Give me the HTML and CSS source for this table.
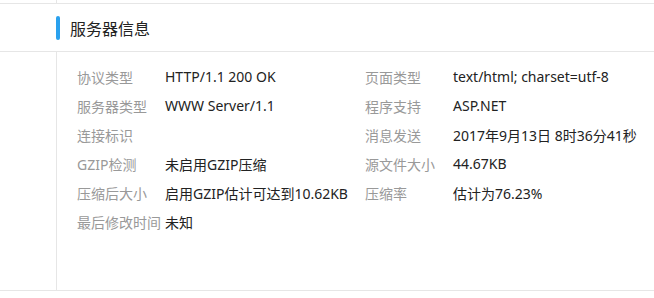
FILE: index.html
```html
<!DOCTYPE html>
<html lang="zh-CN">
<head>
<meta charset="utf-8">
<title>服务器信息</title>
<link rel="stylesheet" href="styles.css">
</head>
<body>
<div class="page">
  <div class="top-strip"></div>
  <div class="panel-head">
    <span class="head-bar"></span>
    <h2 class="head-title">服务器信息</h2>
  </div>
  <div class="panel-body">
    <div class="info-grid">
      <div class="item"><span class="label">协议类型</span><span class="value">HTTP/1.1 200 OK</span></div>
      <div class="item"><span class="label">页面类型</span><span class="value">text/html; charset=utf-8</span></div>
      <div class="item"><span class="label">服务器类型</span><span class="value">WWW Server/1.1</span></div>
      <div class="item"><span class="label">程序支持</span><span class="value">ASP.NET</span></div>
      <div class="item"><span class="label">连接标识</span><span class="value"></span></div>
      <div class="item"><span class="label">消息发送</span><span class="value">2017年9月13日 8时36分41秒</span></div>
      <div class="item"><span class="label">GZIP检测</span><span class="value">未启用GZIP压缩</span></div>
      <div class="item"><span class="label">源文件大小</span><span class="value">44.67KB</span></div>
      <div class="item"><span class="label">压缩后大小</span><span class="value">启用GZIP估计可达到10.62KB</span></div>
      <div class="item"><span class="label">压缩率</span><span class="value">估计为76.23%</span></div>
      <div class="item"><span class="label">最后修改时间</span><span class="value">未知</span></div>
    </div>
  </div>
</div>
</body>
</html>
```

FILE: styles.css
```css
html, body {
  margin: 0;
  padding: 0;
  background: #ffffff;
}

body {
  font-family: "Noto Sans", "Noto Sans CJK SC", sans-serif;
  font-size: 14px;
  color: #333333;
}

.page {
  width: 654px;
}

.top-strip {
  height: 3px;
  margin-left: 56px;
  border-left: 1px solid #e6e6e6;
}

.panel-head {
  height: 47px;
  border-top: 1px solid #e6e6e6;
  border-bottom: 1px solid #e6e6e6;
  display: flex;
  align-items: center;
  padding-left: 56px;
}

.head-bar {
  width: 4px;
  height: 24px;
  border-radius: 2px;
  background: #2aa1ee;
  margin-top: 1px;
}

.head-title {
  margin: 0 0 0 10px;
  font-size: 16px;
  font-weight: normal;
  color: #222222;
  line-height: 24px;
  padding-top: 2px;
}

.panel-body {
  display: flex;
  height: 228px;
  padding-top: 10px;
  border-bottom: 1px solid #e6e6e6;
}

.panel-body::before {
  content: "";
  width: 56px;
  flex: none;
  border-right: 1px solid #e6e6e6;
  margin-top: -10px;
}

.info-grid {
  display: grid;
  grid-template-columns: 288px 288px;
  grid-auto-rows: 29px;
  margin-left: 20px;
  align-content: start;
}

.item {
  display: flex;
  align-items: center;
  white-space: nowrap;
}

.label {
  width: 88px;
  flex: none;
  color: #999999;
}

.value {
  color: #222222;
}
```
